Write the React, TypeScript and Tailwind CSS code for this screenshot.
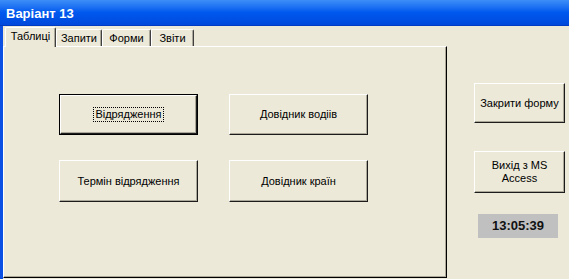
import React from "react";

const font = { fontFamily: '"Liberation Sans", Arial, sans-serif' };

function Btn({
  children,
  def,
  w,
  h,
  focus,
}: {
  children: React.ReactNode;
  def?: boolean;
  w: string;
  h: string;
  focus?: boolean;
}) {
  const inner = (
    <div className="flex-1 flex items-center justify-center text-center border border-t-white border-l-white border-r-[#1c1c1c] border-b-[#1c1c1c] shadow-[inset_-1px_-1px_0_#aca899] bg-[#ece9d8] text-[11px] leading-[13px] text-black">
      {focus ? (
        <span className="outline-1 outline-dotted outline-black px-[1px]">{children}</span>
      ) : (
        children
      )}
    </div>
  );
  return (
    <div className={`${w} ${h} flex ${def ? "border border-black" : ""}`}>{inner}</div>
  );
}

function Tab({
  label,
  w,
  selected,
}: {
  label: string;
  w: string;
  selected?: boolean;
}) {
  return (
    <div
      className={`${w} ${
        selected ? "h-[20px] -mb-[1px] z-10 pb-[3px]" : "h-[17px]"
      } relative flex items-center justify-center bg-[#ece9d8] border-t border-l border-r border-t-white border-l-white border-r-[#404040] shadow-[inset_-1px_0_0_#aca899] rounded-t-[2px] text-[11px] text-black`}
    >
      {label}
    </div>
  );
}

export default function App() {
  return (
    <div
      className="w-[569px] h-[279px] overflow-hidden bg-[#ece9d8] flex flex-col"
      style={font}
    >
      <div className="h-[26px] shrink-0 flex items-center pl-[6px] pt-[3px] text-white font-bold text-[13px] bg-gradient-to-b from-[#3d8ef7] via-[#0058ee] to-[#0049dc] border-b border-[#003bc2]">
        Варіант 13
      </div>
      <div className="flex flex-1 border-l-[3px] border-[#0b50e2]">
        <div className="w-[444px] flex flex-col pt-[1px] pb-[1px]">
          <div className="flex items-end h-[19px] pl-[2px]">
            <Tab label="Таблиці" w="w-[51px]" selected />
            <Tab label="Запити" w="w-[46px]" />
            <Tab label="Форми" w="w-[49px]" />
            <Tab label="Звіти" w="w-[43px]" />
          </div>
          <div className="flex-1 flex flex-col gap-[25px] pl-[55px] pt-[47px] border border-t-white border-l-white border-r-black border-b-black shadow-[inset_-1px_-1px_0_#aca899]">
            <div className="flex gap-[31px]">
              <Btn def focus w="w-[139px]" h="h-[41px]">
                Відрядження
              </Btn>
              <Btn w="w-[139px]" h="h-[41px]">
                Довідник водіів
              </Btn>
            </div>
            <div className="flex gap-[31px]">
              <Btn w="w-[139px]" h="h-[42px]">
                Термін відрядження
              </Btn>
              <Btn w="w-[139px]" h="h-[42px]">
                Довідник країн
              </Btn>
            </div>
          </div>
        </div>
        <div className="flex flex-col pl-[27px] pt-[57px]">
          <Btn w="w-[91px]" h="h-[40px]">
            Закрити форму
          </Btn>
          <div className="h-[28px]" />
          <Btn w="w-[91px]" h="h-[42px]">
            <span>
              Вихід з MS
              <br />
              Access
            </span>
          </Btn>
          <div className="h-[21px]" />
          <div className="ml-[4px] w-[80px] h-[24px] bg-[#c0c0c0] flex items-center justify-center font-bold text-[13px] text-[#111]">
            13:05:39
          </div>
        </div>
      </div>
    </div>
  );
}
